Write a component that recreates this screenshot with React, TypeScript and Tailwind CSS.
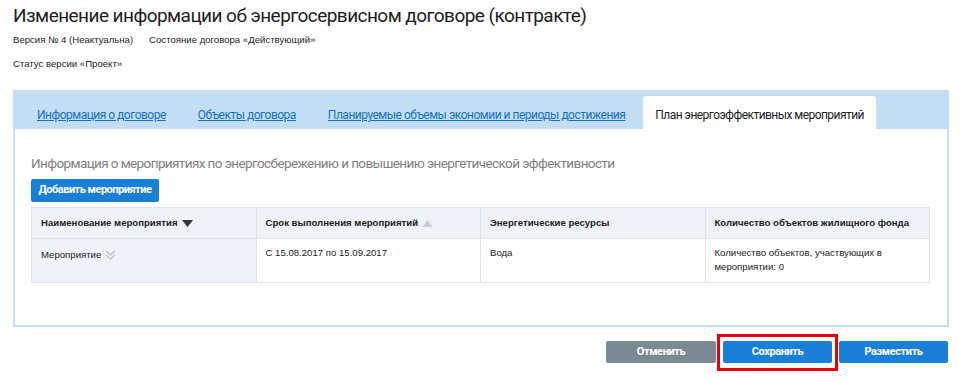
import React from "react";

const tabs = [
  "Информация о договоре",
  "Объекты договора",
  "Планируемые объемы экономии и периоды достижения",
];

const SortDown = () => (
  <svg width="11" height="7" viewBox="0 0 11 7" className="inline-block ml-1">
    <path d="M0 0 L11 0 L5.5 7 Z" fill="#333" />
  </svg>
);

const SortUp = () => (
  <svg width="11" height="7" viewBox="0 0 11 7" className="inline-block ml-1">
    <path d="M0 7 L11 7 L5.5 0 Z" fill="#c9ced3" />
  </svg>
);

const Chevrons = () => (
  <svg width="11" height="11" viewBox="0 0 11 11" className="inline-block ml-1">
    <path d="M1 1 L5.5 5 L10 1" stroke="#c3c8cd" strokeWidth="1.4" fill="none" />
    <path d="M1 5 L5.5 9 L10 5" stroke="#c3c8cd" strokeWidth="1.4" fill="none" />
  </svg>
);

const App: React.FC = () => {
  return (
    <div className="w-[965px] h-[381px] bg-white px-[13px] pt-[3px] font-['Liberation_Sans',Arial,sans-serif] text-[#222]">
      <h1 className="font-['Roboto',sans-serif] text-[19px] tracking-[-0.55px] leading-[26px] text-[#1d1d1d]">
        Изменение информации об энергосервисном договоре (контракте)
      </h1>
      <div className="mt-[5px] flex text-[9.6px] leading-[12px] text-[#222]">
        <span>Версия № 4 (Неактуальна)</span>
        <span className="ml-[16px]">Состояние договора «Действующий»</span>
      </div>
      <div className="mt-[12px] text-[9.6px] leading-[12px] text-[#222]">Статус версии «Проект»</div>

      <div className="mt-[20px] w-[936px] border-2 border-t-0 border-[#c2dff5]">
        <div className="flex h-[39px] items-end bg-[#c2dff5] pl-[6px]">
          {tabs.map((t) => (
            <div key={t} className="flex h-[33px] items-center px-[16px] pt-[5px]">
              <span className="font-['Roboto',sans-serif] text-[12px] tracking-[-0.5px] text-[#1a6fc2] underline">{t}</span>
            </div>
          ))}
          <div className="ml-[2px] flex h-[33px] items-center rounded-t-[3px] bg-white px-[12px] pt-[5px]">
            <span className="font-['Roboto',sans-serif] text-[12px] tracking-[-0.55px] text-[#1d1d1d]">
              План энергоэффективных мероприятий
            </span>
          </div>
        </div>

        <div className="h-[196px] bg-white pl-[16px] pr-[15px] pt-[25px]">
          <h2 className="font-['Roboto',sans-serif] text-[13.5px] tracking-[-0.6px] leading-[18px] text-[#808080]">
            Информация о мероприятиях по энергосбережению и повышению энергетической эффективности
          </h2>
          <button className="mt-[7px] block h-[23px] w-[128px] rounded-[2px] bg-[#1a7fd6] font-['Roboto',sans-serif] text-[11px] tracking-[-0.5px] font-bold text-white">
            Добавить мероприятие
          </button>
          <table className="mt-[5px] w-[899px] table-fixed border-collapse text-[9.6px] leading-[14px]">
            <thead>
              <tr className="h-[31px] bg-[#eff3f7]">
                <th className="border border-[#dfe5eb] px-[9px] text-left font-bold">
                  Наименование мероприятия
                  <SortDown />
                </th>
                <th className="border border-[#dfe5eb] px-[9px] text-left font-bold">
                  Срок выполнения мероприятий
                  <SortUp />
                </th>
                <th className="border border-[#dfe5eb] px-[9px] text-left font-bold">Энергетические ресурсы</th>
                <th className="border border-[#dfe5eb] px-[9px] text-left font-bold">Количество объектов жилищного фонда</th>
              </tr>
            </thead>
            <tbody>
              <tr className="h-[44px]">
                <td className="border border-[#dfe5eb] bg-[#eff3f7] px-[9px] align-top pt-[9px]">
                  Мероприятие
                  <Chevrons />
                </td>
                <td className="border border-[#dfe5eb] px-[9px] align-top pt-[7px]">С 15.08.2017 по 15.09.2017</td>
                <td className="border border-[#dfe5eb] px-[9px] align-top pt-[7px]">Вода</td>
                <td className="border border-[#dfe5eb] px-[9px] align-top pt-[7px] pr-[30px]">
                  Количество объектов, участвующих в мероприятии: 0
                </td>
              </tr>
            </tbody>
          </table>
        </div>
      </div>

      <div className="mt-[14px] flex w-[935px] justify-end gap-[7px]">
        <button className="block h-[22px] w-[110px] rounded-[2px] bg-[#7b8993] font-['Roboto',sans-serif] text-[11px] tracking-[-0.4px] font-bold text-white">
          Отменить
        </button>
        <div className="relative">
          <span className="absolute -left-[6px] -right-[6px] -top-[7px] -bottom-[8px] border-[3px] border-[#e3000f]" />
          <button className="relative block h-[22px] w-[109px] rounded-[2px] bg-[#1a7fd6] font-['Roboto',sans-serif] text-[11px] tracking-[-0.4px] font-bold text-white">
            Сохранить
          </button>
        </div>
        <button className="block h-[22px] w-[109px] rounded-[2px] bg-[#1a7fd6] font-['Roboto',sans-serif] text-[11px] tracking-[-0.4px] font-bold text-white">
          Разместить
        </button>
      </div>
    </div>
  );
};

export default App;
